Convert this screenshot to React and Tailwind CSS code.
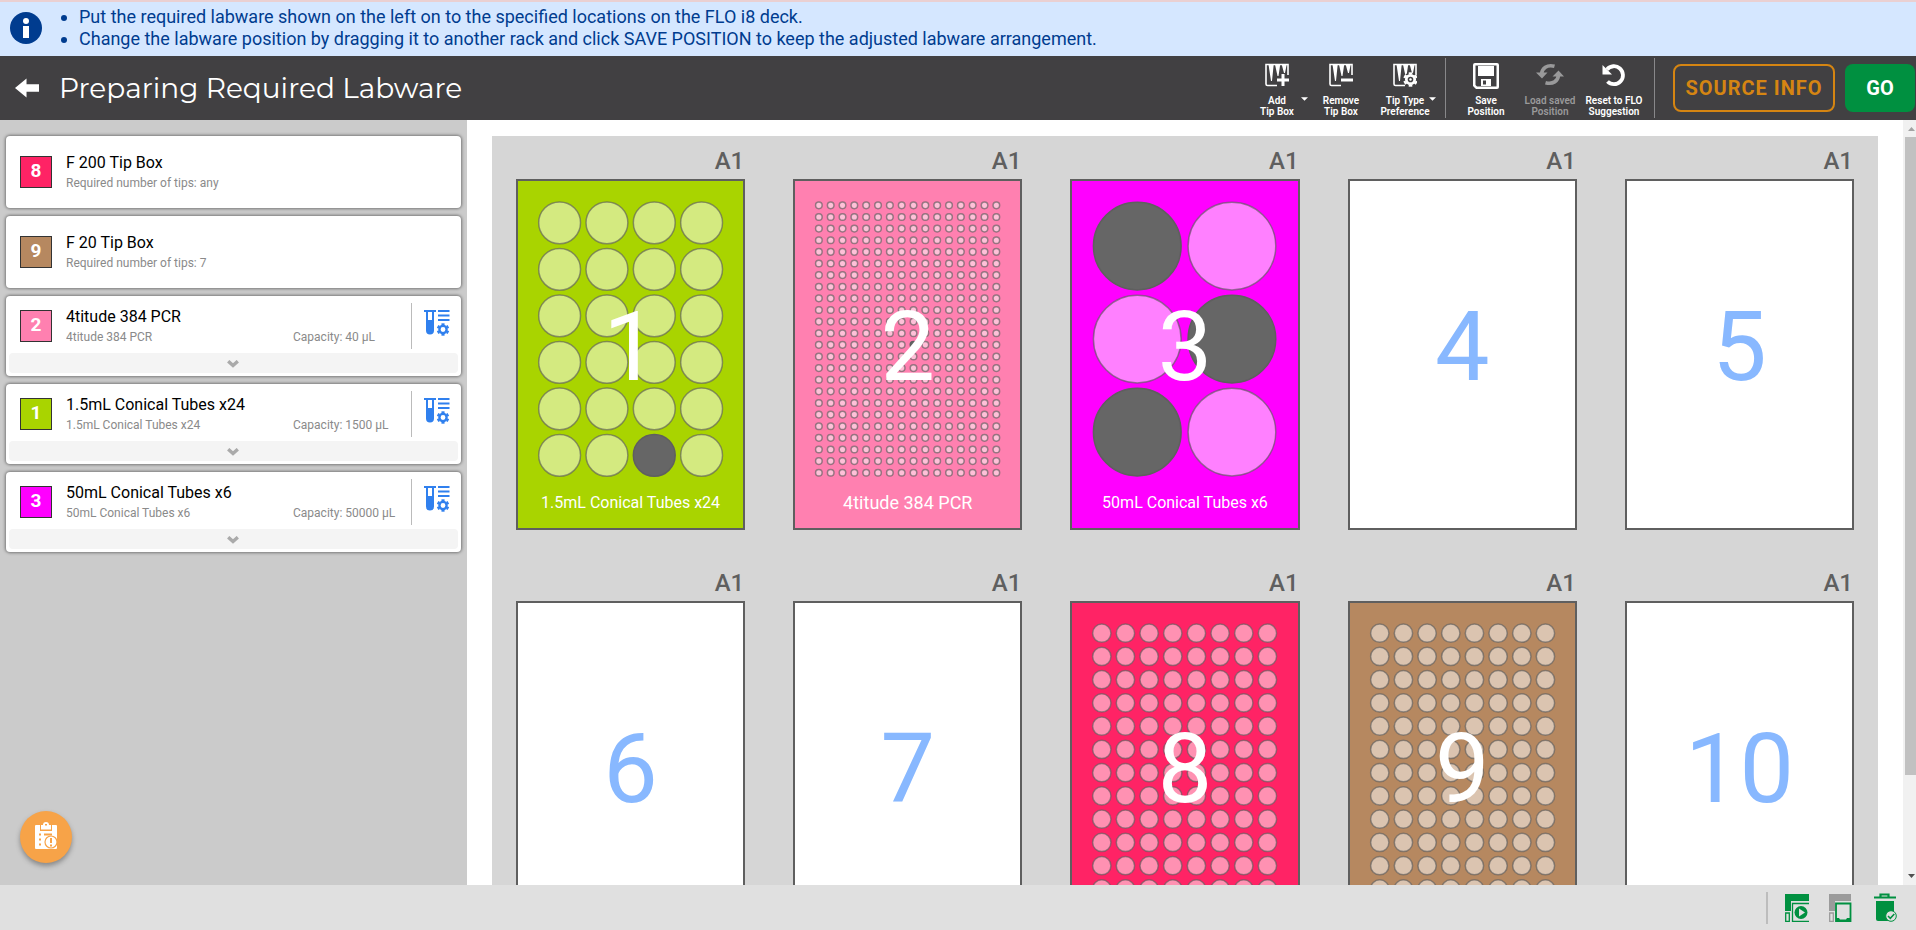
import { useState } from 'react'

const WELLS = { left: 20, top: 20, width: 190, height: 280 }

const labware = [
  { slot: 8, name: 'F 200 Tip Box', detail: 'Required number of tips: any', color: '#ff2365' },
  { slot: 9, name: 'F 20 Tip Box', detail: 'Required number of tips: 7', color: '#b68860' },
  { slot: 2, name: '4titude 384 PCR', detail: '4titude 384 PCR', capacity: '40 µL', color: '#ff80b0' },
  { slot: 1, name: '1.5mL Conical Tubes x24', detail: '1.5mL Conical Tubes x24', capacity: '1500 µL', color: '#a9d400' },
  { slot: 3, name: '50mL Conical Tubes x6', detail: '50mL Conical Tubes x6', capacity: '50000 µL', color: '#ff00ff' },
]

// used wells are listed as "col-row"
const racks = [
  { slot: 1, color: '#a9d400', cols: 4, rows: 6, r: 21, label: '1.5mL Conical Tubes x24', used: ['2-5'] },
  { slot: 2, color: '#ff80b0', cols: 16, rows: 24, r: 3.3, label: '4titude 384 PCR', large: true, used: ['8-12'] },
  { slot: 3, color: '#ff00ff', cols: 2, rows: 3, r: 44, label: '50mL Conical Tubes x6', used: ['0-0', '1-1', '0-2'] },
  { slot: 4 },
  { slot: 5 },
  { slot: 6 },
  { slot: 7 },
  { slot: 8, color: '#ff2365', cols: 8, rows: 12, r: 9.2 },
  { slot: 9, color: '#b68860', cols: 8, rows: 12, r: 9.2 },
  { slot: 10 },
]

function TipBoxIcon({ children }) {
  return (
    <svg viewBox="0 0 24 24" className="w-6 h-6" fill="none" stroke="currentColor" strokeWidth="1.6">
      <path d="M12 22.5H2.5a1.5 1.5 0 0 1-1.5-1.5V1.5H23V12" />
      <path d="M3.500 1.500h5.200L7 18H6zM10 1.500h5.200L13.500 13h-1zM16.700 1.500h5L20 10h-1z" fill="currentColor" stroke="none" />
      {children}
    </svg>
  )
}

function Gear({ x, y, r }) {
  return (
    <g transform={`translate(${x} ${y})`} stroke="currentColor">
      <circle r={r * 0.58} fill="none" strokeWidth={r * 0.38} />
      {[0, 60, 120, 180, 240, 300].map(a => (
        <path key={a} d={`M0 ${-r * 0.7}V${-r}`} strokeWidth={r * 0.5} transform={`rotate(${a})`} />
      ))}
    </g>
  )
}

function AddIcon() {
  return <TipBoxIcon><path d="M18 11v12M12 17h12" strokeWidth="3" /></TipBoxIcon>
}

function RemoveIcon() {
  return <TipBoxIcon><path d="M12 17h12" strokeWidth="3" /></TipBoxIcon>
}

function PreferenceIcon() {
  return (
    <TipBoxIcon>
      <circle cx="17.5" cy="16.5" r="7" fill="#414042" stroke="none" />
      <Gear x={17.5} y={16.5} r={7.2} />
      <circle cx="17.5" cy="16.5" r="1.2" fill="currentColor" stroke="none" />
    </TipBoxIcon>
  )
}

function SaveIcon() {
  return (
    <svg viewBox="0 0 26 26" className="w-[26px] h-[26px]" fill="currentColor">
      <path fillRule="evenodd" d="M2 0h22a2 2 0 0 1 2 2v22a2 2 0 0 1-2 2H3l-3-3V2a2 2 0 0 1 2-2zM2.5 2.5v19.5l1.5 1.5h19.5v-21z" />
      <path d="M5 3h16v10H5z" />
      <path fillRule="evenodd" d="M8 16h10v7H8zM10 17.5v4h3v-4z" />
    </svg>
  )
}

function LoadIcon() {
  return (
    <svg viewBox="0 0 28 24" className="w-7 h-6" fill="none" stroke="currentColor" strokeWidth="3.6">
      <path d="M5.500 11C6 5.500 11 1.200 18.500 3.300" />
      <path d="M22.500 12C22 18 17 21.800 9.500 19.700" />
      <path d="M0 9.500h11.500L6 15.500zM16.500 13.500H28L22.500 7.500z" fill="currentColor" stroke="none" />
    </svg>
  )
}

function ResetIcon() {
  return (
    <svg viewBox="0 0 24 24" className="w-6 h-6" fill="none" stroke="currentColor" strokeWidth="3.8">
      <path d="M5 6.500A9 9 0 1 1 5.500 18.500" />
      <path d="M.5 2v9.500H10z" fill="currentColor" stroke="none" />
    </svg>
  )
}

function TubeSettingsIcon() {
  return (
    <svg viewBox="0 0 26 26" className="w-[26px] h-[26px] text-[#3080ee]" fill="currentColor">
      <path d="M0 0h12v2H0z" />
      <path fillRule="evenodd" d="M2 1h8v19.500a4 4 0 0 1-8 0zM4 2v8h4V2z" />
      <path d="M14 0h11.500v2H14zM14 4.500h11.500v2H14zM14 9h11.500v2H14z" />
      <Gear x={19} y={19.500} r={6.2} />
    </svg>
  )
}

function ToolButton({ icon, lines, menu, disabled }) {
  return (
    <button
      type="button"
      disabled={disabled}
      className={`relative w-16 pt-[7px] flex flex-col items-center text-[10px] leading-[11px] font-semibold whitespace-nowrap ${disabled ? 'text-[#99999a]' : 'text-white'}`}
    >
      <span className="h-8 flex items-start justify-center">{icon}</span>
      <span>{lines[0]}</span>
      <span>{lines[1]}</span>
      {menu && (
        <svg viewBox="0 0 8 4" className="absolute right-px top-[41px] w-[7px] h-1" fill="currentColor">
          <path d="M0 0h8L4 4z" />
        </svg>
      )}
    </button>
  )
}

function LabwareCard({ item }) {
  const [open, setOpen] = useState(false)
  return (
    <li className="bg-white rounded-[4px] shadow-[0_0_3px_1px_#777]">
      <div className={`flex pl-[14px] ${item.capacity ? 'h-[57px] pt-[7px]' : 'h-[72px] pt-[13px]'}`}>
        <span
          className="mt-[7px] w-8 h-8 shrink-0 border border-[#333] flex items-center justify-center pb-[2px] text-white text-[19px] font-bold"
          style={{ backgroundColor: item.color }}
        >
          {item.slot}
        </span>
        <div className="ml-[14px] pt-1 flex-1 min-w-0">
          <p className="text-base leading-5 text-black">{item.name}</p>
          <div className="flex text-xs leading-5 text-[#8a8a8a]">
            <p className="w-[227px] truncate">{item.detail}</p>
            {item.capacity && <p className="whitespace-nowrap">Capacity: {item.capacity}</p>}
          </div>
        </div>
        {item.capacity && (
          <button type="button" aria-label="Labware settings" className="w-[50px] h-[46px] shrink-0 border-l border-[#bbb] pl-3 pt-[7px] flex items-start">
            <TubeSettingsIcon />
          </button>
        )}
      </div>
      {item.capacity && (
        <div className="px-[3px] pb-[3px]">
          <button
            type="button"
            aria-label="Show details"
            aria-expanded={open}
            onClick={() => setOpen(!open)}
            className="w-full h-5 rounded-[4px] bg-[#f4f4f4] flex items-center justify-center pt-px pr-px"
          >
            <svg viewBox="0 0 12 8" className="w-3 h-2" fill="none" stroke="#aaa" strokeWidth="3.4">
              <path d="M1.200 1.200L6 5.500l4.800-4.300" />
            </svg>
          </button>
        </div>
      )}
    </li>
  )
}

function Wells({ rack }) {
  const dx = WELLS.width / rack.cols
  const dy = WELLS.height / rack.rows
  const wells = []
  for (let row = 0; row < rack.rows; row++) {
    for (let col = 0; col < rack.cols; col++) {
      const used = rack.used?.includes(`${col}-${row}`)
      wells.push(
        <circle
          key={`${col}-${row}`}
          cx={WELLS.left + dx * (col + 0.5)}
          cy={WELLS.top + dy * (row + 0.5)}
          r={rack.r}
          fill={used ? '#666' : 'rgba(255,255,255,0.5)'}
          stroke={used ? '#5f5f5f' : 'rgba(95,95,95,0.65)'}
          strokeWidth="1.5"
        />
      )
    }
  }
  return <svg viewBox="2 2 226 347" className="block w-full h-full">{wells}</svg>
}

function Rack({ rack }) {
  return (
    <div className="px-6 pb-7">
      <p className="h-[43px] pt-[9px] pr-px text-right text-2xl leading-8 font-medium text-[#5f5f5f]">A1</p>
      <div
        className="relative h-[351px] border-2 border-[#5f5f5f] bg-white"
        style={{ backgroundColor: rack.color }}
      >
        {rack.cols && <Wells rack={rack} />}
        <span className={`absolute inset-0 pb-[15px] flex items-center justify-center text-[97px] leading-none ${rack.color ? 'text-white' : 'text-[#88b8ff]'}`}>
          {rack.slot}
        </span>
        {rack.label && (
          <span className={`absolute inset-x-0 bottom-[15px] text-center text-white ${rack.large ? 'text-lg leading-5' : 'text-base leading-5'}`}>
            {rack.label}
          </span>
        )}
      </div>
    </div>
  )
}

export default function App() {
  return (
    <div className="h-screen flex flex-col overflow-hidden bg-white font-['Roboto',sans-serif]">
      <div className="h-14 shrink-0 flex items-center border-t-2 border-[#ead0d2] bg-[#d5e7ff] pl-[10px] pb-[2px] text-[#003c8f]">
        <svg viewBox="0 0 32 32" className="w-8 h-8">
          <circle cx="16" cy="16" r="16" fill="#003c8f" />
          <circle cx="16" cy="9" r="3" fill="#fff" />
          <path d="M13 14h6v12h-6z" fill="#fff" />
        </svg>
        <ul className="list-disc pl-[37px] text-lg leading-[22px]">
          <li>Put the required labware shown on the left on to the specified locations on the FLO i8 deck.</li>
          <li>Change the labware position by dragging it to another rack and click SAVE POSITION to keep the adjusted labware arrangement.</li>
        </ul>
      </div>

      <header className="h-16 shrink-0 flex items-center bg-[#414042] text-white">
        <button type="button" aria-label="Back" className="ml-[15px] w-6">
          <svg viewBox="0 0 25 20" className="w-6 h-5" fill="currentColor">
            <path d="M0 10L12 0v6h13v8H12v6z" />
          </svg>
        </button>
        <h1 className="ml-5 flex-1 text-[28px] leading-8 font-['Montserrat','Open_Sans',sans-serif] whitespace-nowrap">
          Preparing Required Labware
        </h1>
        <div className="flex h-full">
          <ToolButton icon={<AddIcon />} lines={['Add', 'Tip Box']} menu />
          <ToolButton icon={<RemoveIcon />} lines={['Remove', 'Tip Box']} />
          <ToolButton icon={<PreferenceIcon />} lines={['Tip Type', 'Preference']} menu />
          <span className="mx-2 my-[2px] w-px bg-[#88888a]" />
          <ToolButton icon={<SaveIcon />} lines={['Save', 'Position']} />
          <ToolButton icon={<LoadIcon />} lines={['Load saved', 'Position']} disabled />
          <ToolButton icon={<ResetIcon />} lines={['Reset to FLO', 'Suggestion']} />
          <span className="mx-2 my-[2px] w-px bg-[#88888a]" />
        </div>
        <button type="button" className="ml-[10px] w-[162px] h-12 rounded-lg border-2 border-[#d58512] text-[#d58512] text-xl font-bold tracking-wider">
          SOURCE INFO
        </button>
        <button type="button" className="ml-[10px] mr-px w-[70px] h-12 rounded-lg bg-[#009040] text-white text-xl font-bold">
          GO
        </button>
      </header>

      <div className="flex-1 min-h-0 flex">
        <aside className="relative w-[467px] shrink-0 bg-[#cbcbcb] px-[6px] pt-4">
          <ul className="flex flex-col gap-2">
            {labware.map(item => <LabwareCard key={item.slot} item={item} />)}
          </ul>
          <button
            type="button"
            aria-label="Checklist"
            className="absolute left-5 bottom-[22px] w-[52px] h-[52px] rounded-full bg-[#f7a348] shadow-[0_3px_5px_#888] flex items-center justify-center"
          >
            <svg viewBox="0 0 22 27" className="w-[22px] h-[27px] mb-1" fill="#fff">
              <path d="M1 3h4v6h12V3h4a1 1 0 0 1 1 1v22a1 1 0 0 1-1 1H1a1 1 0 0 1-1-1V4a1 1 0 0 1 1-1z" />
              <path fillRule="evenodd" d="M6 3h2a3 3 0 0 1 6 0h2v4.500H6zM10 2v1.500h2V2z" />
              <path d="M4 12.500h2M9 12.500h8M4 17.500h2M4 22.500h2" stroke="#f7a348" strokeWidth="2" />
              <circle cx="16" cy="20" r="6" stroke="#f7a348" strokeWidth="1.200" />
              <path d="M15 16h2v5h-2zM15 22.500h2v2h-2z" fill="#f7a348" />
            </svg>
          </button>
        </aside>

        <main className="flex-1 min-w-0 overflow-hidden px-[25px] pt-4">
          <div className="grid grid-cols-5 bg-[#d6d6d6]">
            {racks.map(rack => <Rack key={rack.slot} rack={rack} />)}
          </div>
        </main>

        <div className="w-[13px] shrink-0 flex flex-col items-center bg-[#f1f1f1]">
          <svg viewBox="0 0 13 17" className="w-[13px] h-[17px] shrink-0"><path d="M5 11h7L8.500 7z" fill="#a3a3a3" /></svg>
          <div className="ml-[2px] w-[11px] h-5/6 bg-[#c1c1c1]" />
          <svg viewBox="0 0 13 17" className="w-[13px] h-[17px] shrink-0 mt-auto"><path d="M5 6h7L8.500 10z" fill="#505050" /></svg>
        </div>
      </div>

      <footer className="h-[45px] shrink-0 flex items-center justify-end bg-[#e0e0e0] pr-[19px] text-[#009040]">
        <span className="w-[2px] h-8 bg-[#bdbdbd]" />
        <button type="button" aria-label="Run deck" className="ml-[17px]">
          <svg viewBox="0 0 24 28" className="w-6 h-7" fill="none" stroke="currentColor">
            <path d="M0 0h24v7H6v10H0z" fill="currentColor" stroke="none" />
            <path d="M.7 19h3.600v8.300H.7zM24 9.500H7.500v17.800H24" strokeWidth="1.300" />
            <circle cx="16" cy="18.500" r="6.500" fill="currentColor" stroke="none" />
            <path d="M14 14.500l6 4-6 4z" fill="#e0e0e0" stroke="none" />
          </svg>
        </button>
        <button type="button" aria-label="Deck view" className="ml-5">
          <svg viewBox="0 0 24 28" className="w-6 h-7" fill="none">
            <path d="M0 0h22v7H6v10H0z" fill="#9b9b9b" />
            <path d="M.7 19h3.600v8.300H.7z" stroke="#9b9b9b" strokeWidth="1.300" />
            <path d="M7 9.500h14.500v17.500H7z" stroke="currentColor" strokeWidth="1.800" />
            <path d="M7 24h3l1 1.500h6l1-1.500h3.500v3H7z" fill="currentColor" />
          </svg>
        </button>
        <button type="button" aria-label="Clear deck" className="ml-5">
          <svg viewBox="0 0 24 29" className="w-6 h-[29px]" fill="none">
            <path d="M1 4.500h22M7.500 4V1.500h8V4" stroke="currentColor" strokeWidth="2.200" />
            <path d="M3 8h18v20H5a2 2 0 0 1-2-2z" fill="currentColor" />
            <circle cx="18" cy="23" r="5.300" fill="#e0e0e0" stroke="currentColor" />
            <path d="M15 23l2.300 2.300 4-4.300" stroke="currentColor" strokeWidth="1.500" />
          </svg>
        </button>
      </footer>
    </div>
  )
}
